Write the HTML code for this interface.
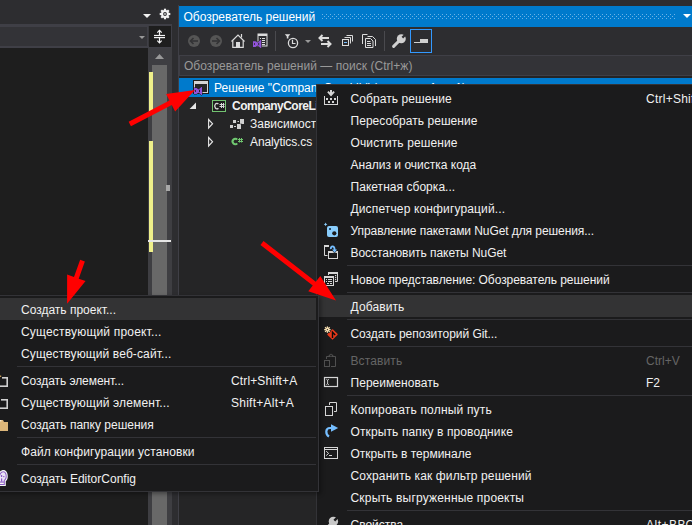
<!DOCTYPE html>
<html><head><meta charset="utf-8">
<style>
*{margin:0;padding:0;box-sizing:border-box}
html,body{width:692px;height:525px;overflow:hidden;background:#2d2d30}
body{position:relative;font-family:"Liberation Sans",sans-serif;font-size:12px;color:#f1f1f1}
.a{position:absolute}
.t{position:absolute;white-space:nowrap;line-height:14px;height:14px}
</style></head><body>

<!-- top-left area -->
<svg class="a" style="left:0;top:0" width="178" height="24">
  <polygon points="143,14 151,14 147,18" fill="#f1f1f1"/>
  <g transform="translate(165,14)">
    <g fill="#f4f4f4">
      <rect x="-1.1" y="-5.3" width="2.2" height="10.6"/>
      <rect x="-5.3" y="-1.1" width="10.6" height="2.2"/>
      <rect x="-1.1" y="-5.3" width="2.2" height="10.6" transform="rotate(45)"/>
      <rect x="-1.1" y="-5.3" width="2.2" height="10.6" transform="rotate(-45)"/>
      <circle r="3.9"/>
    </g>
    <circle r="1.9" fill="#2d2d30"/>
    <circle r="0.9" fill="#cfcfcf"/>
  </g>
</svg>

<!-- combobox row -->
<div class="a" style="left:0;top:24px;width:172px;height:24px;background:#3f3f46"></div>
<div class="a" style="left:0;top:27px;width:147px;height:19px;background:#333337"></div>
<div class="a" style="left:148px;top:26px;width:1px;height:20px;background:#38383c"></div>
<div class="a" style="left:149px;top:26px;width:22px;height:21px;background:#1e1e1e"></div>
<svg class="a" style="left:0;top:24px" width="172" height="24">
  <polygon points="139,12 145,12 142,15" fill="#999"/>
  <g stroke="#f4f4f4" stroke-width="1.2" fill="none">
    <line x1="154" y1="11.5" x2="165" y2="11.5"/>
    <line x1="154" y1="13.6" x2="165" y2="13.6"/>
    <line x1="159.5" y1="6.5" x2="159.5" y2="11"/>
    <line x1="159.5" y1="14" x2="159.5" y2="18.5"/>
    <polyline points="157.3,8.6 159.5,6.4 161.7,8.6"/>
    <polyline points="157.3,16.6 159.5,18.8 161.7,16.6"/>
  </g>
</svg>

<!-- editor -->
<div class="a" style="left:0;top:48px;width:148px;height:477px;background:#1e1e1e"></div>
<!-- scrollbar -->
<div class="a" style="left:148px;top:48px;width:24px;height:477px;background:#3e3e42"></div>
<svg class="a" style="left:148px;top:48px" width="24" height="20"><polygon points="7,11 16,11 11.5,6" fill="#999"/></svg>
<div class="a" style="left:152px;top:65px;width:15px;height:460px;background:#686868"></div>
<div class="a" style="left:149px;top:72px;width:4px;height:39px;background:#eff08a"></div>
<div class="a" style="left:149px;top:141px;width:4px;height:111px;background:#eff08a"></div>
<div class="a" style="left:166px;top:185px;width:4px;height:6px;background:#a8a8a8"></div>
<div class="a" style="left:148px;top:240px;width:23px;height:2px;background:#e6e6e6"></div>
<div class="a" style="left:178px;top:5px;width:1px;height:520px;background:#3f3f46"></div>

<!-- Solution explorer -->
<div class="a" style="left:179px;top:6px;width:513px;height:21px;background:#007acc"></div>
<div class="t" style="left:183.5px;top:10px;color:#fff;letter-spacing:-0.03px">Обозреватель решений</div>
<svg class="a" style="left:179px;top:6px" width="513" height="21">
  <defs><pattern id="dots" x="143" y="8" width="4" height="4" patternUnits="userSpaceOnUse">
    <rect x="0" y="0" width="1" height="1" fill="#6cb2e6"/><rect x="2" y="2" width="1" height="1" fill="#6cb2e6"/>
  </pattern></defs>
  <rect x="143" y="8" width="353" height="5" fill="url(#dots)"/>
  <polygon points="504,8 512,8 508,12" fill="#fff"/>
</svg>


<!-- toolbar icons -->
<svg class="a" style="left:0;top:0" width="692" height="80">
  <!-- back / forward -->
  <circle cx="194" cy="41" r="6" fill="#555555"/>
  <g stroke="#333335" stroke-width="1.6" fill="none"><line x1="191" y1="41" x2="198" y2="41"/><polyline points="193.5,38 190.5,41 193.5,44"/></g>
  <circle cx="216" cy="41" r="6" fill="#555555"/>
  <g stroke="#333335" stroke-width="1.6" fill="none"><line x1="212" y1="41" x2="219" y2="41"/><polyline points="216.5,38 219.5,41 216.5,44"/></g>
  <!-- home -->
  <g stroke="#dcdcdc" stroke-width="1.2" fill="none">
    <polyline points="231.5,41.5 238,35 244.5,41.5"/>
    <polyline points="232.8,40.5 232.8,47.4 243.2,47.4 243.2,40.5"/>
    <line x1="241.5" y1="34" x2="241.5" y2="37.5"/>
  </g>
  <rect x="236" y="42" width="4" height="6" fill="#dcdcdc"/>
  <!-- solution doc + vs logo -->
  <rect x="258" y="34" width="9" height="12" fill="none" stroke="#dcdcdc" stroke-width="1"/>
  <rect x="258" y="34" width="9" height="2" fill="#dcdcdc"/>
  <g fill="#dcdcdc"><rect x="260" y="38" width="1" height="1"/><rect x="262" y="38" width="3" height="1"/><rect x="262" y="40" width="3" height="1"/><rect x="262" y="42" width="3" height="1"/><rect x="262" y="44" width="3" height="1"/></g>
  <path d="M253,41.2 L255.6,41.2 L257.6,42.6 L260.6,40 L261.2,40 L261.2,48 L260.6,48 L257.6,45.4 L255.6,46.9 L253,46.9 Z M254,43 L254.8,43 L254.8,45 L254,45 Z M258.2,43 L259.2,42.6 L259.2,45.4 L258.2,45 Z" fill="#9153d9" fill-rule="evenodd" stroke="#2d2d30" stroke-width="1.2" paint-order="stroke"/>
  <!-- separator -->
  <rect x="275" y="31" width="1" height="20" fill="#4a4a4e"/>
  <!-- filter + clock -->
  <polygon points="284.8,34.2 290.4,34.2 288.4,36.6 288.4,38.4 286.8,38.4 286.8,36.6" fill="#dcdcdc"/>
  <circle cx="293" cy="43" r="4.6" fill="none" stroke="#dcdcdc" stroke-width="1.3"/>
  <polyline points="292.5,39.8 292.5,43.5 295.5,43.5" fill="none" stroke="#dcdcdc" stroke-width="1.2"/>
  <polygon points="305,40 311,40 308,43" fill="#999"/>
  <!-- sync -->
  <g stroke="#dcdcdc" stroke-width="2" fill="none">
    <line x1="320" y1="38" x2="329" y2="38"/><polyline points="322.5,35 319.5,38 322.5,41"/>
    <line x1="321" y1="44" x2="330" y2="44"/><polyline points="327.5,41 330.5,44 327.5,47"/>
  </g>
  <!-- collapse all -->
  <g stroke="#dcdcdc" stroke-width="1" fill="none">
    <rect x="342.5" y="39.5" width="6" height="6"/>
    <polyline points="344.5,37.5 350.5,37.5 350.5,43.5"/>
    <polyline points="346.5,35.5 352.5,35.5 352.5,41.5"/>
  </g>
  <rect x="344" y="42" width="3" height="1" fill="#75beff"/>
  <!-- show all files -->
  <g stroke="#dcdcdc" stroke-width="1" fill="none">
    <polyline points="367.5,34.5 362.5,34.5 362.5,44"/>
    <polyline points="367.5,36.5 372.5,36.5 375.5,39.5 375.5,46"/>
    <path d="M365.5,38.5 L370.5,38.5 L373,41 L373,47.5 L365.5,47.5 Z"/>
  </g>
  <g fill="#dcdcdc"><rect x="367" y="41" width="3.5" height="1"/><rect x="367" y="43" width="4" height="1"/><rect x="367" y="45" width="4" height="1"/></g>
  <rect x="384" y="31" width="1" height="20" fill="#4a4a4e"/>
  <!-- wrench -->
  <circle cx="401.3" cy="38.7" r="4.5" fill="#d0d0d0"/>
  <rect x="-1.1" y="-2.6" width="2.2" height="5.2" fill="#2d2d30" transform="translate(404.2,35.8) rotate(45)"/>
  <line x1="400" y1="40" x2="393.6" y2="46.4" stroke="#d0d0d0" stroke-width="3" stroke-linecap="round"/>
  <!-- preview toggle -->
  <rect x="410.5" y="29.5" width="21" height="23" fill="none" stroke="#3399ff" stroke-width="1"/>
  <rect x="414" y="42" width="6" height="1" fill="#d0d0d0"/>
  <rect x="420" y="39" width="8" height="4" fill="#d0d0d0"/>
</svg>

<!-- search -->
<div class="a" style="left:179px;top:55px;width:513px;height:21px;background:#3f3f46"></div>
<div class="a" style="left:180px;top:56px;width:512px;height:19px;background:#333337"></div>
<div class="t" style="left:184px;top:59px;color:#999;letter-spacing:0.04px">Обозреватель решений — поиск (Ctrl+ж)</div>

<!-- tree -->
<div class="a" style="left:179px;top:76px;width:513px;height:449px;background:#252526"></div>
<div class="a" style="left:179px;top:78px;width:513px;height:19px;background:#007acc"></div>
<div class="t" style="left:214px;top:81px;color:#fff">Решение "CompanyCoreLib" (проекты: 1 из 1)</div>
<div class="t" style="left:232px;top:99px;font-weight:bold;letter-spacing:-0.5px">CompanyCoreLib</div>
<div class="t" style="left:250px;top:117px">Зависимости</div>
<div class="t" style="left:250px;top:135px;letter-spacing:-0.1px">Analytics.cs</div>


<!-- tree icons -->
<svg class="a" style="left:0;top:0" width="320" height="160">
  <!-- solution icon -->
  <rect x="193" y="80" width="16" height="14" fill="#1e1e1e"/>
  <rect x="194" y="81" width="14" height="12" fill="#d4d4d4"/>
  <rect x="195" y="84" width="12" height="8" fill="#252526"/>
  <path d="M194,88 L196.6,88 L198.5,89.5 L201.4,87 L202,87 L202,95 L201.4,95 L198.5,92.6 L196.6,94 L194,94 Z M195,90 L195.8,90 L195.8,92 L195,92 Z M199,90 L200,89.6 L200,92.4 L199,92 Z" fill="#9153d9" fill-rule="evenodd" stroke="#1e1e1e" stroke-width="1" paint-order="stroke"/>
  <!-- expanded triangle -->
  <polygon points="189.6,109 196,109 196,102.6" fill="#e6e6e6"/>
  <!-- C# project -->
  <rect x="212.5" y="100.5" width="13" height="11" fill="#1e1e1e" stroke="#73c371" stroke-width="1"/>
  <path d="M218.4,104 A2.2,2.75 0 1 0 218.4,108.2" fill="none" stroke="#d8d8d8" stroke-width="1.3"/>
  <g fill="#d8d8d8"><rect x="221" y="103" width="1" height="5"/><rect x="223" y="103" width="1" height="5"/><rect x="219.5" y="104" width="5" height="1"/><rect x="219.5" y="106" width="5" height="1"/></g>
  <!-- collapsed triangles -->
  <polygon points="208.6,119.5 208.6,128 212.6,123.75" fill="none" stroke="#e6e6e6" stroke-width="1.1"/>
  <polygon points="208.6,137.5 208.6,146 212.6,141.75" fill="none" stroke="#e6e6e6" stroke-width="1.1"/>
  <!-- deps -->
  <g fill="#d0d0d0">
    <rect x="233" y="120" width="3" height="3"/><rect x="237.5" y="121" width="1.5" height="1"/>
    <rect x="240" y="119" width="4" height="5"/>
    <rect x="230" y="125" width="3" height="3"/><rect x="234" y="126" width="2" height="1"/>
    <rect x="237" y="124" width="4" height="5"/>
  </g>
  <rect x="240.5" y="123.5" width="1" height="1" fill="#252526"/>
  <!-- C# file -->
  <path d="M237.2,139.7 A2.6,2.75 0 1 0 237.2,143.3" fill="none" stroke="#70c870" stroke-width="2"/>
  <g stroke="#70c870" stroke-width="1"><line x1="239.5" y1="138" x2="239.5" y2="142.5"/><line x1="241.5" y1="138" x2="241.5" y2="142.5"/><line x1="238" y1="139.5" x2="243" y2="139.5"/><line x1="238" y1="141.5" x2="243" y2="141.5"/></g>
</svg>

<!-- main context menu -->
<div class="a" id="menu" style="left:316px;top:84px;width:400px;height:460px;background:#1b1b1c;border:1px solid #333337"></div>
<!--MENUITEMS-->
<div class="t" style="left:350.5px;top:92px;letter-spacing:0.08px;">Собрать решение</div>
<div class="t" style="left:646px;top:92px;letter-spacing:0.25px">Ctrl+Shift+B</div>
<div class="t" style="left:350.5px;top:114px;letter-spacing:0.04px;">Пересобрать решение</div>
<div class="t" style="left:350.5px;top:136px;letter-spacing:0.12px;">Очистить решение</div>
<div class="t" style="left:350.5px;top:158px;">Анализ и очистка кода</div>
<div class="t" style="left:350.5px;top:180px;letter-spacing:0.04px;">Пакетная сборка...</div>
<div class="t" style="left:350.5px;top:202px;letter-spacing:0.14px;">Диспетчер конфигураций...</div>
<div class="t" style="left:350.5px;top:224px;letter-spacing:-0.075px;">Управление пакетами NuGet для решения...</div>
<div class="t" style="left:350.5px;top:246px;letter-spacing:-0.05px;">Восстановить пакеты NuGet</div>
<div class="a" style="left:347px;top:265px;width:345px;height:1px;background:#333337"></div>
<div class="t" style="left:350.5px;top:273px;letter-spacing:-0.06px;">Новое представление: Обозреватель решений</div>
<div class="a" style="left:347px;top:292px;width:345px;height:1px;background:#333337"></div>
<div class="a" style="left:319px;top:295px;width:373px;height:22px;background:#333334"></div>
<div class="t" style="left:350.5px;top:300px;letter-spacing:0.12px;">Добавить</div>
<div class="a" style="left:347px;top:319px;width:345px;height:1px;background:#333337"></div>
<div class="t" style="left:350.5px;top:327px;letter-spacing:-0.055px;">Создать репозиторий Git...</div>
<div class="a" style="left:347px;top:346px;width:345px;height:1px;background:#333337"></div>
<div class="t" style="left:350.5px;top:354px;color:#656565;letter-spacing:0.12px;">Вставить</div>
<div class="t" style="left:646px;top:354px;color:#656565;">Ctrl+V</div>
<div class="t" style="left:350.5px;top:376px;letter-spacing:0.04px;">Переименовать</div>
<div class="t" style="left:646px;top:376px;">F2</div>
<div class="a" style="left:347px;top:395px;width:345px;height:1px;background:#333337"></div>
<div class="t" style="left:350.5px;top:403px;letter-spacing:0.18px;">Копировать полный путь</div>
<div class="t" style="left:350.5px;top:425px;letter-spacing:0.115px;">Открыть папку в проводнике</div>
<div class="t" style="left:350.5px;top:447px;">Открыть в терминале</div>
<div class="t" style="left:350.5px;top:469px;letter-spacing:0.115px;">Сохранить как фильтр решений</div>
<div class="t" style="left:350.5px;top:491px;letter-spacing:0.18px;">Скрыть выгруженные проекты</div>
<div class="a" style="left:347px;top:510px;width:345px;height:1px;background:#333337"></div>
<div class="t" style="left:350.5px;top:518px;">Свойства</div>
<div class="t" style="left:646px;top:518px;letter-spacing:0.5px">Alt+ВВОД</div>
<!--/MENUITEMS-->
<!-- menu icons -->
<svg class="a" style="left:316px;top:84px" width="40" height="441">
<g transform="translate(-316,-84)">
  <!-- build -->
  <g fill="#d6d6d6">
    <rect x="330" y="90" width="2" height="5"/>
    <polygon points="327.2,92.2 328.6,91 331,93.6 333.4,91 334.8,92.2 331,96.6"/>
    <rect x="324" y="96" width="1" height="9"/><rect x="337" y="96" width="1" height="9"/><rect x="324" y="104" width="14" height="1"/>
    <rect x="326" y="98" width="2" height="2"/><rect x="330" y="98" width="2" height="2"/><rect x="334" y="98" width="2" height="2"/>
    <rect x="328" y="101" width="2" height="2"/><rect x="332" y="101" width="2" height="2"/>
  </g>
  <!-- nuget -->
  <rect x="327" y="226" width="11" height="11" rx="2" fill="#89cdfc"/>
  <rect x="329" y="228" width="2" height="2" fill="#2a4a66"/>
  <circle cx="334.3" cy="233.3" r="2.1" fill="#1b1b1c"/>
  <polygon points="325.6,222.6 326.2,223.8 327.4,224.4 326.2,225 325.6,226.2 325,225 323.8,224.4 325,223.8" fill="#89cdfc"/>
  <!-- restore -->
  <g fill="none" stroke="#d6d6d6" stroke-width="1">
    <polyline points="328.5,245.5 324.5,245.5 324.5,255.5 327.5,255.5"/>
    <rect x="328.5" y="251.5" width="9" height="7"/>
  </g>
  <rect x="324" y="245" width="5" height="2" fill="#d6d6d6"/>
  <rect x="328" y="251" width="10" height="2" fill="#d6d6d6"/>
  <path d="M330.8,249.2 C330.4,245.6 334.6,245.2 334.6,249.4 L334.6,250.5" fill="none" stroke="#1b1b1c" stroke-width="3.2"/>
  <polygon points="331.2,249.2 337.9,249.2 334.55,253.6" fill="#1b1b1c"/>
  <path d="M330.8,249.2 C330.4,245.6 334.6,245.2 334.6,249.4 L334.6,250.5" fill="none" stroke="#75beff" stroke-width="1.8"/>
  <polygon points="332.1,249.6 337,249.6 334.55,252.8" fill="#75beff"/>
  <!-- new view -->
  <g fill="none" stroke="#d6d6d6" stroke-width="1">
    <polyline points="328.5,275 328.5,272.5 337.5,272.5 337.5,281.5 335,281.5"/>
    <rect x="324.5" y="276.5" width="9" height="9"/>
  </g>
  <rect x="328" y="272" width="10" height="2" fill="#d6d6d6"/>
  <rect x="324" y="276" width="10" height="2" fill="#d6d6d6"/>
  <g fill="#d6d6d6">
    <rect x="335" y="275" width="1.2" height="1.2"/><rect x="335" y="277" width="1.2" height="1.2"/><rect x="335" y="279" width="1.2" height="1.2"/>
    <rect x="326" y="279" width="1" height="1"/><rect x="328" y="279" width="4" height="1"/>
    <rect x="326" y="281" width="1" height="1"/><rect x="328" y="281" width="4" height="1"/>
    <rect x="327" y="283" width="2" height="1"/><rect x="330" y="283" width="2" height="1"/>
  </g>
  <!-- git -->
  <g transform="translate(332.5,334.4) rotate(45)">
    <rect x="-3.9" y="-3.9" width="7.8" height="7.8" rx="0.8" fill="#e8391a"/>
  </g>
  <path d="M332.5,338 L332.5,332.2 L335.2,335" fill="none" stroke="#0a0a0a" stroke-width="1.4"/>
  <g transform="translate(327.4,329.6)">
    <circle r="3.6" fill="#1b1b1c"/>
    <g stroke="#f7dfb0" stroke-width="1.3">
      <line x1="0" y1="-3.2" x2="0" y2="3.2"/><line x1="-3.2" y1="0" x2="3.2" y2="0"/>
      <line x1="-2.3" y1="-2.3" x2="2.3" y2="2.3"/><line x1="-2.3" y1="2.3" x2="2.3" y2="-2.3"/>
    </g>
    <circle r="1.6" fill="#f7dfb0"/><circle r="0.6" fill="#1b1b1c"/>
  </g>
  <!-- paste (disabled) -->
  <g fill="none" stroke="#505050" stroke-width="1">
    <polyline points="326.5,359 326.5,356.5 335.5,356.5 335.5,366.5 331,366.5"/>
    <rect x="324.5" y="360.5" width="5" height="6"/>
    <path d="M329,356.5 C329,353.6 333,353.6 333,356.5 Z" fill="#505050"/>
  </g>
  <circle cx="331" cy="355.6" r="0.9" fill="#1b1b1c"/>
  <!-- rename -->
  <rect x="324.5" y="377.5" width="13" height="9" fill="#1e1e1e" stroke="#d6d6d6" stroke-width="1.2"/>
  <g stroke="#d6d6d6" stroke-width="0.9" fill="none"><line x1="327.6" y1="380" x2="327.6" y2="384"/><polyline points="326.3,379.2 327.6,380.2 328.9,379.2"/><polyline points="326.3,384.8 327.6,383.8 328.9,384.8"/></g>
  <!-- copy path -->
  <g fill="none" stroke="#d6d6d6" stroke-width="1">
    <polyline points="329.5,405 329.5,402.5 336.5,402.5 336.5,411.5 334,411.5"/>
    <rect x="325.5" y="406.5" width="7" height="9" fill="#1b1b1c"/>
  </g>
  <!-- open folder in explorer -->
  <path d="M333.5,428 L330,428 C325,428 325.5,434.5 329,436.5" fill="none" stroke="#75beff" stroke-width="2.2"/>
  <polygon points="331,424.2 338.2,428 331,431.8" fill="#75beff"/>
  <!-- terminal -->
  <g fill="none" stroke="#d6d6d6" stroke-width="1">
    <rect x="324.5" y="447.5" width="13" height="11"/>
    <line x1="325" y1="449.5" x2="337" y2="449.5"/>
    <polyline points="326.2,451.2 328.6,453.4 326.2,455.6"/>
  </g>
  <rect x="329" y="455" width="3" height="1" fill="#d6d6d6"/>
  <!-- properties wrench -->
  <circle cx="333.4" cy="521.4" r="4.7" fill="#c8c8c8"/>
  <rect x="-1.2" y="-2.8" width="2.4" height="5.6" fill="#1b1b1c" transform="translate(336.3,518.6) rotate(45)"/>
  <line x1="332" y1="523" x2="326" y2="529" stroke="#c8c8c8" stroke-width="3.2" stroke-linecap="round"/>
</g>
</svg>


<!-- submenu -->
<div class="a" id="sub" style="left:-20px;top:295px;width:339px;height:197px;background:#1b1b1c;border:1px solid #333337;box-shadow:2px 2px 4px rgba(0,0,0,0.35)"></div>
<!--SUBITEMS-->
<div class="a" style="left:0;top:298px;width:316px;height:22px;background:#333334"></div>
<div class="t" style="left:21px;top:303px">Создать проект...</div>
<div class="t" style="left:21px;top:325px;letter-spacing:0.19px;">Существующий проект...</div>
<div class="t" style="left:21px;top:347px;letter-spacing:0.12px;">Существующий веб-сайт...</div>
<div class="a" style="left:17px;top:366px;width:299px;height:1px;background:#333337"></div>
<div class="t" style="left:21px;top:374px;letter-spacing:-0.07px;">Создать элемент...</div>
<div class="t" style="left:231px;top:374px;letter-spacing:0.14px;">Ctrl+Shift+A</div>
<div class="t" style="left:21px;top:396px;letter-spacing:0.135px;">Существующий элемент...</div>
<div class="t" style="left:231px;top:396px;letter-spacing:0.26px;">Shift+Alt+A</div>
<div class="t" style="left:21px;top:418px">Создать папку решения</div>
<div class="a" style="left:17px;top:437px;width:299px;height:1px;background:#333337"></div>
<div class="t" style="left:21px;top:445px;letter-spacing:0.1px;">Файл конфигурации установки</div>
<div class="a" style="left:17px;top:464px;width:299px;height:1px;background:#333337"></div>
<div class="t" style="left:21px;top:472px">Создать EditorConfig</div>
<!--/SUBITEMS-->
<!-- submenu icons -->
<svg class="a" style="left:0;top:370px" width="12" height="120">
<g transform="translate(0,-370)">
  <g fill="#d0d0d0">
    <rect x="2" y="377" width="6" height="1.6"/><rect x="6.4" y="377" width="1.6" height="10"/><rect x="0" y="385.4" width="8" height="1.6"/>
    <rect x="1" y="399" width="7" height="1.6"/><rect x="6.4" y="399" width="1.6" height="10"/><rect x="0" y="407.4" width="8" height="1.6"/>
  </g>
  <rect x="0" y="375.6" width="1.2" height="1.2" fill="#f0b860"/>
  <path d="M0,422 L0,431 L8,431 L8,422 L4,422 L3,420 L0,420 Z" fill="#dcb67a"/>
  <rect x="0" y="420" width="1.4" height="1.4" fill="#f5e7cc"/>
  <!-- editorconfig bulb -->
  <path d="M-2,477 C-2,472.5 0.8,470 3.4,470 C6,470 7.8,472.6 7.8,476.4 C7.8,478.8 6.8,480.4 5.8,481.2 L5.8,486 L-2,486 Z" fill="#f4f4f4"/>
  <path d="M-1,477 C-1,473.4 1.2,471.2 3.4,471.2 C5.5,471.2 6.7,473.4 6.7,476.4 C6.7,478.4 5.8,479.8 4.8,480.6 L4.8,485 L-1,485 Z" fill="#8a5cc4"/>
  <path d="M0,477 C0,474.2 1.6,472.3 3.4,472.3 C4.9,472.3 5.7,474.1 5.7,476.4 C5.7,478 5,479.1 3.8,480 L3.8,481.6 L0,481.6 Z" fill="#ebe4f5"/>
  <rect x="0" y="482.6" width="3.8" height="1.4" fill="#f4f4f4"/>
  <g fill="#8a5cc4"><rect x="1" y="475" width="1.2" height="2"/><rect x="3.2" y="476" width="1.2" height="1.2"/><rect x="1" y="478.4" width="1.2" height="3.2"/></g>
</g>
</svg>



<!-- arrows -->
<svg class="a" style="left:0;top:0" width="692" height="525">
  <polygon points="130.96,126.22 171.77,104.93 175.15,111.40 195.00,90.00 166.08,94.03 169.46,100.50 128.64,121.78" fill="#ff0000"/>
  <polygon points="260.47,244.97 312.75,285.60 308.27,291.37 336.00,300.50 320.30,275.89 315.82,281.65 263.53,241.03" fill="#ff0000"/>
  <polygon points="80.15,259.76 74.00,276.96 67.12,274.51 67.10,303.70 85.58,281.10 78.71,278.64 84.85,261.44" fill="#ff0000"/>
</svg>

</body></html>
